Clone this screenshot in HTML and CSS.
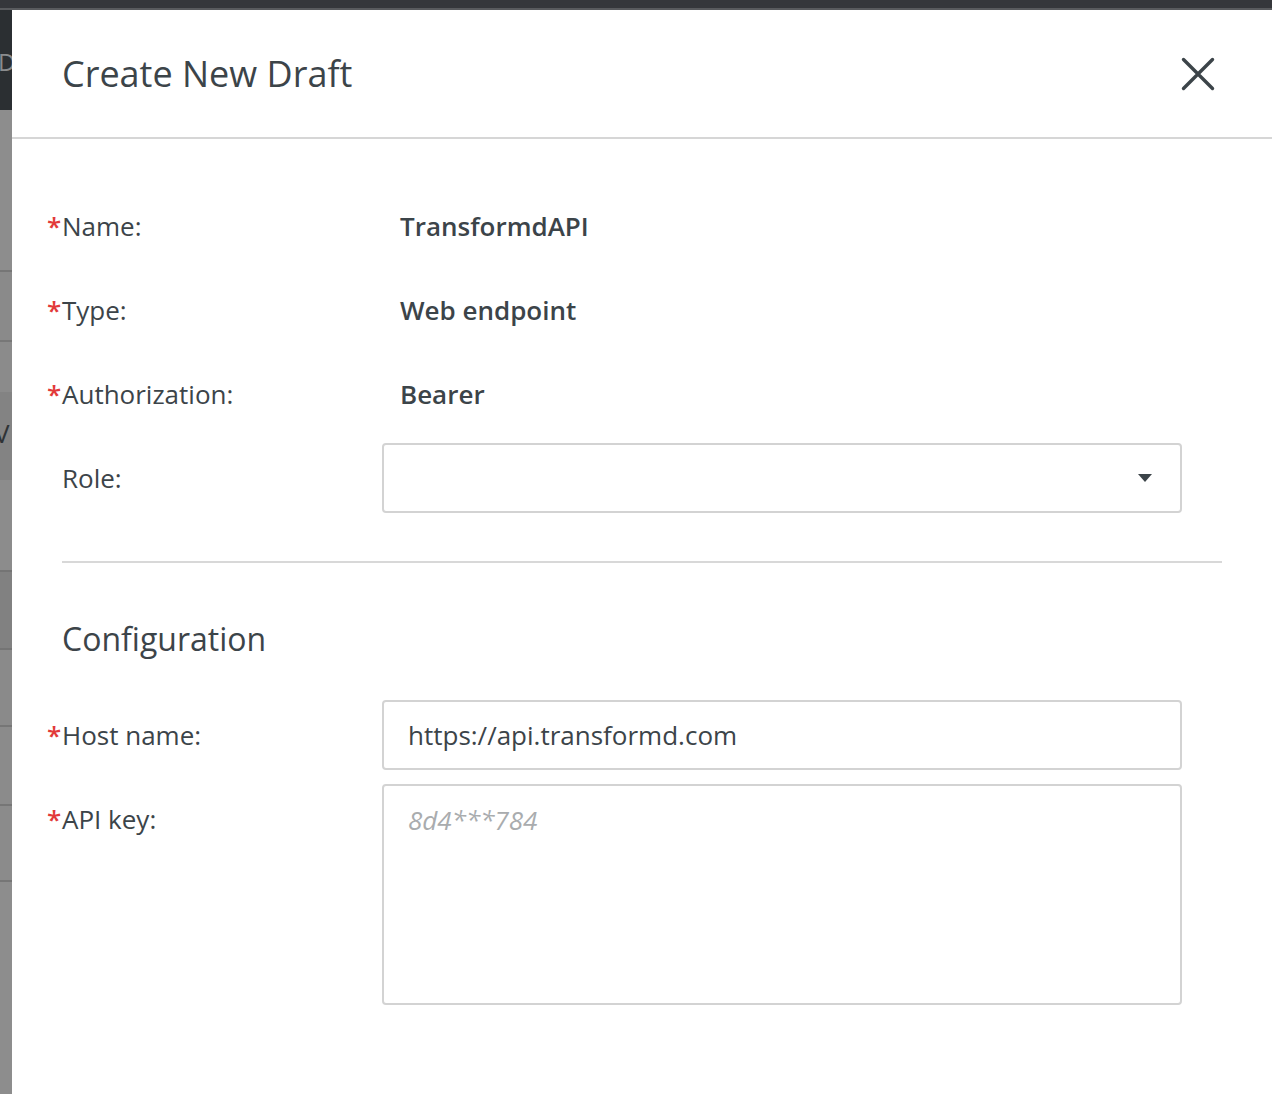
FILE: index.html
```html
<!DOCTYPE html>
<html lang="en">
<head>
<meta charset="utf-8">
<title>Create New Draft</title>
<link rel="stylesheet" href="styles.css">
</head>
<body>
<div class="topbar"></div>
<div class="screen">
  <aside class="strip">
    <div class="seg seg-dark"><span class="ghost-d">D</span></div>
    <div class="seg seg-a"></div>
    <div class="seg seg-b"></div>
    <div class="seg seg-c"></div>
    <div class="seg seg-d"><span class="ghost-v">V</span></div>
    <div class="seg seg-e"></div>
    <div class="seg seg-f"></div>
    <div class="seg seg-g"></div>
    <div class="seg seg-h"></div>
    <div class="seg seg-i"></div>
    <div class="seg seg-j"></div>
  </aside>
  <section class="modal">
    <header class="modal-header">
      <h1 class="modal-title">Create New Draft</h1>
      <button class="close-btn" aria-label="Close">
        <svg width="34" height="34" viewBox="0 0 34 34"><path d="M2.5 2.5 L31.5 31.5 M31.5 2.5 L2.5 31.5" stroke="#3c4449" stroke-width="3.4" stroke-linecap="round" fill="none"/></svg>
      </button>
    </header>
    <div class="modal-body">
      <div class="rows">
        <div class="row"><div class="label"><span class="req">*</span>Name:</div><div class="value">TransformdAPI</div></div>
        <div class="row"><div class="label"><span class="req">*</span>Type:</div><div class="value">Web endpoint</div></div>
        <div class="row"><div class="label"><span class="req">*</span>Authorization:</div><div class="value">Bearer</div></div>
        <div class="row"><div class="label">Role:</div>
          <div class="field select"><span class="caret"></span></div>
        </div>
      </div>
      <hr class="divider">
      <h2 class="section-title">Configuration</h2>
      <div class="rows">
        <div class="row"><div class="label"><span class="req">*</span>Host name:</div><div class="field input">https://api.transformd.com</div></div>
        <div class="row row-top"><div class="label"><span class="req">*</span>API key:</div><div class="field textarea"><span class="placeholder">8d4***784</span></div></div>
      </div>
    </div>
  </section>
</div>
</body>
</html>
```
FILE: styles.css
```css
* { box-sizing: border-box; }
html, body { margin: 0; padding: 0; }
body {
  width: 1272px;
  height: 1094px;
  overflow: hidden;
  font-family: "Open Sans", "Noto Sans", sans-serif;
  color: #3c4449;
  background: #8c8c8c;
}
.topbar {
  height: 10px;
  background: #35373b;
  border-bottom: 2px solid #595b5e;
}
.screen {
  display: flex;
  height: 1084px;
}
.strip {
  width: 12px;
  flex: none;
  display: flex;
  flex-direction: column;
  overflow: hidden;
  background: #8d8d8d;
}
.seg { flex: none; position: relative; overflow: hidden; }
.seg-dark { height: 100px; background: #2b2f32; }
.ghost-d { display: block; margin: 40px 0 0 -2px; font-size: 24px; line-height: 24px; color: #8a8c8e; }
.seg-a { height: 162px; background: #8d8d8d; border-bottom: 2px solid #767676; }
.seg-b { height: 70px; background: #8a8a8a; border-bottom: 2px solid #777; }
.seg-c { height: 50px; background: #8b8b8b; }
.seg-d { height: 88px; background: #838383; }
.ghost-v { display: block; margin: 28px 0 0 -6px; font-size: 26px; line-height: 26px; color: #2f3336; }
.seg-e { height: 92px; background: #8c8c8c; border-bottom: 2px solid #747474; }
.seg-f { height: 78px; background: #818181; border-bottom: 2px solid #747474; }
.seg-g { height: 77px; background: #8a8a8a; border-bottom: 2px solid #767676; }
.seg-h { height: 79px; background: #8b8b8b; border-bottom: 2px solid #767676; }
.seg-i { height: 76px; background: #8b8b8b; border-bottom: 2px solid #767676; }
.seg-j { flex: 1; background: #8d8d8d; }

.modal {
  flex: 1;
  background: #fff;
}
.modal-header {
  height: 129px;
  border-bottom: 2px solid #d6d6d6;
  display: flex;
  align-items: center;
  justify-content: space-between;
  padding: 0 57px 0 50px;
}
.modal-title {
  margin: 0;
  font-size: 36px;
  font-weight: 400;
  line-height: 48px;
  color: #3c4449;
}
.close-btn {
  border: 0;
  background: none;
  padding: 0;
  width: 34px;
  height: 34px;
  display: flex;
  cursor: pointer;
}
.modal-body {
  padding: 52px 50px 0 50px;
}
.rows {
  display: flex;
  flex-direction: column;
  gap: 14px;
}
.row {
  display: flex;
  align-items: center;
  min-height: 70px;
}
.row-top { align-items: flex-start; }
.label {
  width: 320px;
  flex: none;
  height: 70px;
  display: flex;
  align-items: center;
  font-size: 26px;
  color: #3c4449;
}
.req {
  color: #e23a3a;
  margin-left: -15px;
  width: 15px;
  font-weight: 600;
  font-size: 26px;
}
.value {
  padding-left: 18px;
  font-size: 26px;
  font-weight: 600;
  color: #3c4449;
}
.field {
  width: 800px;
  border: 2px solid #d3d3d3;
  border-radius: 4px;
  font-size: 26px;
}
.select {
  height: 70px;
  display: flex;
  align-items: center;
  justify-content: flex-end;
  padding-right: 28px;
}
.caret {
  width: 0;
  height: 0;
  border-left: 7px solid transparent;
  border-right: 7px solid transparent;
  border-top: 8px solid #3c4449;
}
.input {
  height: 70px;
  display: flex;
  align-items: center;
  padding: 0 24px;
  color: #3c4449;
}
.textarea {
  height: 221px;
  padding: 16px 24px;
  line-height: 36px;
}
.placeholder {
  font-style: italic;
  color: #a9acae;
}
.divider {
  margin: 48px 0 0 0;
  border: 0;
  border-top: 2px solid #d8d8d8;
  height: 0;
}
.section-title {
  margin: 54px 0 39px 0;
  font-size: 32px;
  line-height: 44px;
  font-weight: 400;
  color: #3c4449;
}
```
